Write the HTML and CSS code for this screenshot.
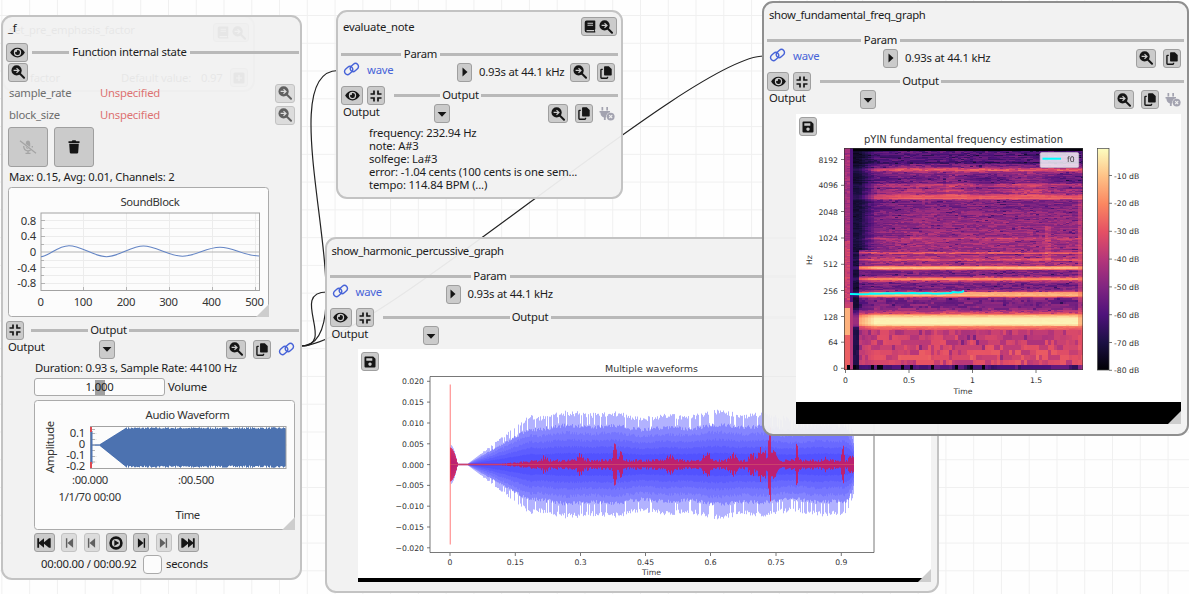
FILE: index.html
```html
<!DOCTYPE html>
<html lang="en">
<head>
<meta charset="utf-8">
<title>Audio function graph</title>
<link rel="stylesheet" href="styles.css">
</head>
<body>
<svg class="defs" width="0" height="0">
  <symbol id="eye" viewBox="0 0 576 512"><path d="M572.52 241.4C518.29 135.59 410.93 64 288 64S57.68 135.64 3.48 241.41a32.35 32.35 0 0 0 0 29.19C57.71 376.41 165.07 448 288 448s230.32-71.64 284.52-177.41a32.35 32.35 0 0 0 0-29.19zM288 400a144 144 0 1 1 144-144 143.93 143.93 0 0 1-144 144zm0-240a95.31 95.31 0 0 0-25.31 3.79 47.85 47.85 0 0 1-66.9 66.9A95.78 95.78 0 1 0 288 160z"/></symbol>
  <symbol id="zoom" viewBox="0 0 14 14"><circle cx="5.6" cy="5.4" r="5.1"/><path d="M9 8.8l4 4" stroke="currentColor" stroke-width="2" stroke-linecap="round"/><path class="cut" d="M2.6 5.4h5M5.5 3.1l2.5 2.3-2.5 2.3"/></symbol>
  <symbol id="book" viewBox="0 0 12 14"><path d="M2.4.5H11q.7 0 .7.7v8.6q0 .5-.5.7v1.7h.5v1.3H2.4Q.3 13.500.3 11.400V2.600Q.3.5 2.400.5z"/><path class="cut" d="M3.300 3.500h6M3.300 5.700h6M2.300 11.500h8"/></symbol>
  <symbol id="copy" viewBox="0 0 13 14"><path d="M5.200.3h4.300l3.200 3v6.200q0 .8-.8.8H5.200q-.8 0-.8-.8V1.100q0-.8.8-.8z"/><path d="M3 3.600H1.800q-.8 0-.8.8v8q0 .8.8.8h5.600q.8 0 .8-.8v-.8" fill="none" stroke="currentColor" stroke-width="1.500"/></symbol>
  <symbol id="link" viewBox="0 0 18 14"><g fill="none" stroke="currentColor" stroke-width="1.500"><rect x="-4.800" y="-3.200" width="9.600" height="6.400" rx="3.200" transform="translate(6 8.600) rotate(-42)"/><rect x="-4.800" y="-3.200" width="9.600" height="6.400" rx="3.200" transform="translate(12 5.400) rotate(-42)"/></g></symbol>
  <symbol id="plug" viewBox="0 0 16 14"><path d="M2.500 0h1.700v3.500H2.500zM7.300 0H9v3.500H7.300zM.5 4h10.500v1.500H10Q7 7 7.300 10.200L6.700 10.500V13H4.900v-2.600Q1.500 9.500 1.400 5.500H.5z"/><circle cx="11.700" cy="9.600" r="3.900"/><path class="cut" d="M10.200 8.100l3 3M13.200 8.100l-3 3"/></symbol>
  <symbol id="play" viewBox="0 0 8 12"><path d="M1.500 1.500L6.500 6l-5 4.500z"/></symbol>
  <symbol id="down" viewBox="0 0 10 12"><path d="M.6 4h8.800L5 8.800z"/></symbol>
  <symbol id="shrink" viewBox="0 0 12 12"><path d="M4 .5V4H.5M8 .5V4h3.500M4 11.500V8H.5M8 11.500V8h3.500" fill="none" stroke="currentColor" stroke-width="1.700"/></symbol>
  <symbol id="save" viewBox="0 0 12 12"><path fill-rule="evenodd" d="M1.500.5h7.700l2.300 2.300v7.700q0 1-1 1h-9q-1 0-1-1v-9q0-1 1-1zM2.300 2.200v2.600h6V2.200zM6 6.400a1.700 1.700 0 1 0 .01 0z"/></symbol>
  <symbol id="trash" viewBox="0 0 12 14"><path d="M.5 1.300h3.200L4.500.3h3l.8 1h3.200v1.600H.5zM1.200 3.800h9.600L10.200 12.500q-.1 1-1.200 1H3q-1.100 0-1.200-1z"/></symbol>
  <symbol id="micoff" viewBox="0 0 18 14"><path d="M6.800 3q0-2.500 2.200-2.500T11.200 3v4L6.800 4zM6.800 6.500l3 2.500q-3 0-3-2.500z"/><path d="M1 .8l16 12.400M4.700 6q0 4.700 4.300 4.900 1.600 0 2.600-.8M9 11v2.500M6.500 13.300h5M13.300 6v1.500" fill="none" stroke="currentColor" stroke-width="1.300"/></symbol>
  <symbol id="first" viewBox="0 0 14 10"><path d="M.3.3h1.800v4L7 .3v4l5-4H13.700V9.700H12L7 5.700v4L2.100 5.700v4H.3z"/></symbol>
  <symbol id="prev" viewBox="0 0 8 10"><path d="M.4.300h1.400v9.400H.4zM7.600.300v9.400L2 5z"/></symbol>
  <symbol id="circleplay" viewBox="0 0 14 14"><circle cx="7" cy="7" r="5.400" fill="none" stroke="currentColor" stroke-width="2.600"/><path d="M5.300 3.900L10.200 7l-4.900 3.100z"/></symbol>
  <symbol id="plus" viewBox="0 0 12 12"><rect x=".5" y=".5" width="11" height="11" rx="1.500"/><path class="cut" d="M6 3v6M3 6h6"/></symbol>
</svg>

<main class="canvas">
  <svg class="wires" width="1189" height="594" viewBox="0 0 1189 594">
    <path d="M301 346C371 346 265 70.500 338 70.500"/>
    <path d="M301 346C337 346 289 292 327 292"/>
    <path d="M301 346C371 346 692 56 764 56"/>
  </svg>

  <section class="node ghost">
    <div class="title-row"><span class="g-title">set_pre_emphasis_factor</span><span class="btn wide g-btn"><svg class="i-book"><use href="#book"/></svg><svg class="i14"><use href="#zoom"/></svg></span></div>
    <div class="g-param">Param</div>
    <div class="g-row"><span class="g-factor">factor</span><span class="g-value">Default value:</span><span class="g-number">0.97</span><span class="btn b18"><svg class="i12"><use href="#plus"/></svg></span></div>
  </section>

  <section class="node fn">
    <div class="fn-title">_f</div>
    <div class="fn-head"><span class="btn b21"><svg class="i-eye"><use href="#eye"/></svg></span><i class="rule r-state"></i><span class="label l-state">Function internal state</span><i class="rule fill"></i></div>
    <div class="fn-zoom"><span class="btn b20"><svg class="i14"><use href="#zoom"/></svg></span></div>
    <div class="field"><span class="key">sample_rate</span><span class="missing">Unspecified</span><span class="btn b20 faded"><svg class="i14"><use href="#zoom"/></svg></span></div>
    <div class="field second"><span class="key">block_size</span><span class="missing">Unspecified</span><span class="btn b20 faded"><svg class="i14"><use href="#zoom"/></svg></span></div>
    <div class="big-buttons"><span class="btn b40 off"><svg class="i-mic"><use href="#micoff"/></svg></span><span class="btn b40"><svg class="i-trash"><use href="#trash"/></svg></span></div>
    <div class="stats">Max: 0.15, Avg: 0.01, Channels: 2</div>

    <svg class="chart sound" width="261" height="130" viewBox="8 187 261 130">
      <rect class="frame" x="8.500" y="187.500" width="260" height="129" rx="3"/>
      <path class="corner" d="M269 304v13h-13z"/>
      <g class="grid"><path d="M83.500 213v78M126.500 213v78M169.500 213v78M212.500 213v78M255.500 213v78M41 220.500h219M41 228.500h219M41 236.500h219M41 244.500h219M41 260.500h219M41 267.500h219M41 275.500h219M41 283.500h219"/></g>
      <path class="axis" d="M41 252h219M83.500 287v4M126.500 287v4M169.500 287v4M212.500 287v4M255.500 287v4M41 220.500h4M41 228.500h3M41 236.500h4M41 244.500h3M41 260.500h3M41 267.500h4M41 275.500h3M41 283.500h4"/>
      <rect class="plot" x="41" y="213" width="218.500" height="77.500"/>
      <path class="curve" d="M41 256.800C50 256 57 245.700 69 245.700S94 256.700 106.500 256.700 131 246 143.500 246 169 256.200 182.500 256.200 206 247.300 220 247.300 242 255.500 259 256"/>
      <g class="t"><text x="120.500" y="206" textLength="59">SoundBlock</text>
      <g class="end"><text x="36" y="224.500">0.8</text><text x="36" y="240">0.4</text><text x="36" y="256">0</text><text x="36" y="271.500">-0.4</text><text x="36" y="287">-0.8</text></g>
      <g class="mid"><text x="40.500" y="305.500">0</text><text x="83" y="305.500">100</text><text x="126" y="305.500">200</text><text x="168.500" y="305.500">300</text><text x="211.500" y="305.500">400</text><text x="254.500" y="305.500">500</text></g></g>
    </svg>

    <div class="fn-output"><span class="btn b18"><svg class="i12"><use href="#shrink"/></svg></span><i class="rule r-fnout"></i><span class="label l-output">Output</span><i class="rule fill"></i></div>
    <div class="fn-combo"><span class="combo-label">Output</span><span class="btn b16"><svg class="i-down"><use href="#down"/></svg></span><span class="btn b20 push"><svg class="i14"><use href="#zoom"/></svg></span><span class="btn b18 gap7"><svg class="i-copy"><use href="#copy"/></svg></span><svg class="i-link gap7"><use href="#link"/></svg></div>
    <div class="duration">Duration: 0.93 s, Sample Rate: 44100 Hz</div>
    <div class="volume"><span class="slider"><i class="grab"></i><span>1.000</span></span><span class="volume-label">Volume</span></div>

    <svg class="chart audio" width="261" height="130" viewBox="34 400 261 130">
      <rect class="frame" x="34.500" y="400.500" width="260" height="129" rx="3"/>
      <path class="corner" d="M295 517v13h-13z"/>
      <path class="grid" d="M91 433.500h6M91 439.500h6M91 445h196M91 456.500h6M91 462h6"/>
      <path id="audio-wave" class="wave-fill"/>
      <path class="axis" d="M91 429.500h4M91 433.500h4M91 439.500h4M91 445h4M91 450.500h4M91 456.500h4M91 462h4"/>
      <rect class="plot" x="90.500" y="426.500" width="195.500" height="42"/>
      <path d="M91.500 431V464" stroke="#4c72b0" stroke-width="2"/>
      <path class="cursor" d="M91 427v5M91 462v6"/>
      <g class="t"><text x="145.500" y="419" textLength="84">Audio Waveform</text><text x="175.500" y="518.500" textLength="24.500">Time</text>
      <text x="72" y="484" textLength="36">:00.000</text><text x="178" y="484" textLength="36">:00.500</text><text x="58.500" y="501" textLength="62.500">1/1/70 00:00</text>
      <text transform="translate(53.500 473) rotate(-90)" textLength="52">Amplitude</text>
      <g class="end"><text x="85" y="437">0.1</text><text x="85" y="447.500">0</text><text x="85" y="459">-0.1</text><text x="85" y="470">-0.2</text></g></g>
    </svg>

    <div class="transport">
      <span class="btn b21"><svg class="i-first"><use href="#first"/></svg></span>
      <span class="btn b16 faded"><svg class="i-prev"><use href="#prev"/></svg></span>
      <span class="btn b16 faded"><svg class="i-prev"><use href="#prev"/></svg></span>
      <span class="btn b21"><svg class="i14"><use href="#circleplay"/></svg></span>
      <span class="btn b16"><svg class="i-prev flip"><use href="#prev"/></svg></span>
      <span class="btn b16 faded"><svg class="i-prev flip"><use href="#prev"/></svg></span>
      <span class="btn b21"><svg class="i-first flip"><use href="#first"/></svg></span>
    </div>
    <div class="clock"><span class="clock-time">00:00.00 / 00:00.92</span><i class="check"></i><span>seconds</span></div>
  </section>

  <section class="node evaluate">
    <div class="title-row"><span>evaluate_note</span><span class="btn wide"><svg class="i-book"><use href="#book"/></svg><svg class="i14"><use href="#zoom"/></svg></span></div>
    <div class="param-row"><i class="rule r-param"></i><span class="label l-param">Param</span><i class="rule fill"></i></div>
    <div class="wave-row"><svg class="i-link"><use href="#link"/></svg><span class="pin">wave</span><span class="btn b15"><svg class="i-play"><use href="#play"/></svg></span><span class="desc">0.93s at 44.1 kHz</span><span class="btn b20 push"><svg class="i14"><use href="#zoom"/></svg></span><span class="btn b18 gap7"><svg class="i-copy"><use href="#copy"/></svg></span></div>
    <div class="output-row"><span class="btn b21"><svg class="i-eye"><use href="#eye"/></svg></span><span class="btn b18"><svg class="i12"><use href="#shrink"/></svg></span><i class="rule r-out"></i><span class="label l-output">Output</span><i class="rule fill"></i></div>
    <div class="combo-row"><span class="combo-label">Output</span><span class="btn b16"><svg class="i-down"><use href="#down"/></svg></span><span class="btn b20 push"><svg class="i14"><use href="#zoom"/></svg></span><span class="btn b18 gap7"><svg class="i-copy"><use href="#copy"/></svg></span><svg class="i-plug gap6"><use href="#plug"/></svg></div>
    <div class="result"><div>frequency: 232.94 Hz</div><div>note: A#3</div><div>solfege: La#3</div><div>error: -1.04 cents (100 cents is one sem...</div><div>tempo: 114.84 BPM (...)</div></div>
  </section>

  <section class="node harmonic">
    <div class="title-row"><span class="tight">show_harmonic_percussive_graph</span></div>
    <div class="param-row"><i class="rule r-param"></i><span class="label l-param">Param</span><i class="rule fill"></i></div>
    <div class="wave-row"><svg class="i-link"><use href="#link"/></svg><span class="pin">wave</span><span class="btn b15"><svg class="i-play"><use href="#play"/></svg></span><span class="desc">0.93s at 44.1 kHz</span></div>
    <div class="output-row"><span class="btn b21"><svg class="i-eye"><use href="#eye"/></svg></span><span class="btn b18"><svg class="i12"><use href="#shrink"/></svg></span><i class="rule r-out"></i><span class="label l-output">Output</span><i class="rule fill"></i></div>
    <div class="combo-row"><span class="combo-label">Output</span><span class="btn b16"><svg class="i-down"><use href="#down"/></svg></span></div>
    <div class="figure">
      <svg width="573" height="233" viewBox="358 349 573 233">
        <rect x="358" y="349" width="573" height="229" fill="#fff"/><rect x="358" y="578" width="573" height="4" fill="#000"/>
        <path class="corner" d="M931 569v13h-13z"/>
        <g id="blue-wave" class="blue-wave"></g>
        <path d="M450.300 384.500v160" stroke="#ff9a9a" stroke-width="1.300"/>
        <path id="red-wave" class="red-wave"/><path d="M450 464.500h404" stroke="#d0506a" stroke-opacity=".7"/>
        <path class="mpl" d="M430 376.500H874V552.500H430zM427 381.300h3M427 402.100h3M427 423h3M427 443.800h3M427 464.600h3M427 485.400h3M427 506.200h3M427 527h3M427 547.800h3M450 553v3M515.300 553v3M580.500 553v3M645.500 553v3M710.500 553v3M776 553v3M841.300 553v3"/>
        <g class="dj"><text class="mid heading" x="651.500" y="371.500" textLength="93" lengthAdjust="spacingAndGlyphs">Multiple waveforms</text>
        <g class="end"><text x="424" y="384.300">0.020</text><text x="424" y="405.100">0.015</text><text x="424" y="426">0.010</text><text x="424" y="446.800">0.005</text><text x="424" y="467.600">0.000</text><text x="424" y="488.400">−0.005</text><text x="424" y="509.200">−0.010</text><text x="424" y="530">−0.015</text><text x="424" y="550.800">−0.020</text></g>
        <g class="mid"><text x="450" y="564.500">0</text><text x="515.300" y="564.500">0.15</text><text x="580.500" y="564.500">0.3</text><text x="645.500" y="564.500">0.45</text><text x="710.500" y="564.500">0.6</text><text x="776" y="564.500">0.75</text><text x="841.300" y="564.500">0.9</text><text x="651.500" y="575.300">Time</text></g></g>
      </svg>
      <span class="btn b18 save"><svg class="i12"><use href="#save"/></svg></span>
    </div>
  </section>

  <section class="node fundamental">
    <div class="title-row"><span class="tight">show_fundamental_freq_graph</span></div>
    <div class="param-row"><i class="rule r-param"></i><span class="label l-param">Param</span><i class="rule fill"></i></div>
    <div class="wave-row"><svg class="i-link"><use href="#link"/></svg><span class="pin">wave</span><span class="btn b15"><svg class="i-play"><use href="#play"/></svg></span><span class="desc">0.93s at 44.1 kHz</span><span class="btn b20 push"><svg class="i14"><use href="#zoom"/></svg></span><span class="btn b18 gap7"><svg class="i-copy"><use href="#copy"/></svg></span></div>
    <div class="output-row"><span class="btn b21"><svg class="i-eye"><use href="#eye"/></svg></span><span class="btn b18"><svg class="i12"><use href="#shrink"/></svg></span><i class="rule r-out"></i><span class="label l-output">Output</span><i class="rule fill"></i></div>
    <div class="combo-row"><span class="combo-label">Output</span><span class="btn b16"><svg class="i-down"><use href="#down"/></svg></span><span class="btn b20 push"><svg class="i14"><use href="#zoom"/></svg></span><span class="btn b18 gap7"><svg class="i-copy"><use href="#copy"/></svg></span><svg class="i-plug gap6"><use href="#plug"/></svg></div>
    <div class="figure">
      <svg width="385" height="310" viewBox="796 114 385 310">
        <defs><linearGradient id="magma" x1="0" y1="1" x2="0" y2="0"><stop offset="0" stop-color="#000004"/><stop offset=".125" stop-color="#1c1044"/><stop offset=".25" stop-color="#4f127b"/><stop offset=".375" stop-color="#812581"/><stop offset=".5" stop-color="#b5367a"/><stop offset=".625" stop-color="#e55064"/><stop offset=".75" stop-color="#fb8761"/><stop offset=".875" stop-color="#fec287"/><stop offset="1" stop-color="#fcfdbf"/></linearGradient></defs>
        <rect x="796" y="114" width="385" height="288" fill="#fff"/><rect x="796" y="402" width="385" height="22" fill="#000"/>
        <path class="corner" d="M1181 411v13h-13z"/>
        <rect x="1097.500" y="148.500" width="11.500" height="221.500" fill="url(#magma)" stroke="#444" stroke-width=".7"/>
        <path class="mpl" d="M841 159.500h3M841 185.300h3M841 211.500h3M841 238h3M841 264.300h3M841 290.500h3M841 316.500h3M841 342.200h3M841 368.300h3M845.500 370v3M909 370v3M972.500 370v3M1036 370v3M1109 175.500h3M1109 203.300h3M1109 231.300h3M1109 259.100h3M1109 286.900h3M1109 314.700h3M1109 342.500h3M1109 370.300h3"/>
        <g class="dj"><text class="mid heading large" x="963.500" y="142.500" textLength="199" lengthAdjust="spacingAndGlyphs">pYIN fundamental frequency estimation</text>
        <g class="end"><text x="838" y="162.500">8192</text><text x="838" y="188.300">4096</text><text x="838" y="214.500">2048</text><text x="838" y="241">1024</text><text x="838" y="267.300">512</text><text x="838" y="293.500">256</text><text x="838" y="319.500">128</text><text x="838" y="345.200">64</text><text x="838" y="371.300">0</text></g>
        <g class="mid"><text x="845.500" y="382.500">0</text><text x="909" y="382.500">0.5</text><text x="972.500" y="382.500">1</text><text x="1036" y="382.500">1.5</text><text x="963" y="394">Time</text><text transform="translate(812 260) rotate(-90)">Hz</text></g>
        <g><text x="1114" y="178.500">-10 dB</text><text x="1114" y="206.300">-20 dB</text><text x="1114" y="234.300">-30 dB</text><text x="1114" y="262.100">-40 dB</text><text x="1114" y="289.900">-50 dB</text><text x="1114" y="317.700">-60 dB</text><text x="1114" y="345.500">-70 dB</text><text x="1114" y="373.300">-80 dB</text></g></g>
      </svg>
      <canvas id="spectrogram" class="spectrogram" width="239" height="222"></canvas>
      <svg class="legend" width="239" height="222" viewBox="844 148 239 222">
        <rect x="844.300" y="148.300" width="238.500" height="221.500" fill="none" stroke="#333" stroke-width=".7"/>
        <path d="M850 294L860 294.300 869 294 870 293.400 880 293.800 886 293.200 893 293.600 899 292.900 906 293.500 912 293 920 293.400 926 292.900 932 293.500 938 293.700 945 293.200 951 293 953 292 958 292.400 962 292 964 290.600" fill="none" stroke="#00ffff" stroke-width="2"/>
        <rect x="1040.200" y="152.500" width="38.500" height="15" rx="1.500" fill="#fff" fill-opacity=".8" stroke="#ccc" stroke-width=".6"/>
        <path d="M1042.500 158.700h18.500" stroke="#00ffff" stroke-width="2"/><text class="djt" x="1067" y="161.800">f0</text>
      </svg>
      <span class="btn b18 save"><svg class="i12"><use href="#save"/></svg></span>
    </div>
  </section>
</main>
<script src="plots.js"></script>
</body>
</html>
```
FILE: styles.css
```css
* { box-sizing: border-box; }
body { margin: 0; font-family: "Noto Sans", "Open Sans", sans-serif; font-size: 11.3px; letter-spacing: -0.22px; line-height: 14px; color: #1c1c1c; overflow: hidden; }
.defs { position: absolute; }
.canvas {
  position: relative; width: 1189px; height: 594px; overflow: hidden;
  background-color: #fefefe;
  background-image: linear-gradient(90deg, #f0f0f0 1px, transparent 1px), linear-gradient(#f0f0f0 1px, transparent 1px);
  background-size: 27.77px 27.77px; background-position: 1.4px 15px;
}
.wires { position: absolute; left: 0; top: 0; }
.wires path { fill: none; stroke: #222; stroke-width: 1.2; }
.node { position: absolute; border: 2px solid #c3c3c3; border-radius: 11px; background: rgba(241, 241, 241, .95); white-space: nowrap; display: flex; flex-direction: column; }
.ghost { left: 2px; top: 15px; width: 253px; height: 77px; }
.fn { left: 1px; top: 14.5px; width: 300.5px; height: 565.5px; }
.evaluate { left: 336px; top: 10px; width: 286.5px; height: 189px; }
.harmonic { left: 324.500px; top: 237px; width: 614px; height: 356px; }
.fundamental { left: 762px; top: 1px; width: 427px; height: 434.5px; border-color: #8f8f8f; }

.btn { flex: none; display: inline-flex; align-items: center; justify-content: center; height: 19px; background: #cbcbcb; border: 1px solid #9f9f9f; border-radius: 3px; color: #151515; --cut: #cbcbcb; }
.btn.faded { background: #dcdcdc; border-color: #c3c3c3; color: #606060; --cut: #dcdcdc; }
.btn.off { color: #a4a4a4; }
.b15 { width: 15px; } .b16 { width: 16px; } .b18 { width: 18px; } .b20 { width: 20px; } .b21 { width: 22px; }
.b40 { width: 40px; height: 40px; }
.wide { width: 36px; gap: 3px; }
svg { fill: currentColor; flex: none; display: block; }
.cut { fill: none; stroke: var(--cut, #f1f1f1); stroke-width: 1.2; }
.i14 { width: 14px; height: 14px; } .i12 { width: 12px; height: 12px; }
.i-eye { width: 15px; height: 13px; } .i-book { width: 12px; height: 13px; } .i-copy { width: 12px; height: 13px; }
.i-link { width: 17px; height: 14px; color: #4763d8; } .i-plug { width: 16px; height: 14px; color: #a3a3b0; }
.i-play { width: 8px; height: 12px; } .i-down { width: 10px; height: 12px; }
.i-first { width: 14px; height: 10px; } .i-prev { width: 9px; height: 10px; } .flip { transform: scaleX(-1); }
.i-mic { width: 18px; height: 14px; } .i-trash { width: 12px; height: 14px; }
.rule { flex: none; height: 3px; background: #b9b9b9; }
.rule.fill { flex: 1; }
.label { flex: none; text-align: center; padding-bottom: 1px; }
.l-param { width: 39px; } .l-output { width: 41px; } .l-state { width: 121px; }
.push { margin-left: auto; } .gap7 { margin-left: 7px; } .gap6 { margin-left: 6px; }
.tight { letter-spacing: -0.3px; }

.title-row { display: flex; justify-content: space-between; height: 25px; padding: 5px 4px 0 5px; }
.param-row { display: flex; align-items: center; height: 24px; padding: 0 3px; }
.wave-row { display: flex; align-items: center; height: 20px; margin: -4px 0 3px; padding: 0 6px 0 5px; }
.wave-row > .i-link { margin-bottom: 6px; }
.wave-row .pin { width: 97px; padding-left: 7px; margin-bottom: 4px; color: #4763d8; }
.desc { margin-left: 7px; }
.output-row { display: flex; align-items: center; height: 20px; padding: 0 3px; }
.output-row .btn { margin-top: 1px; }
.output-row .btn + .btn { margin-left: 4px; }
.output-row .r-out { margin-left: 9px; }
.combo-row { display: flex; align-items: center; height: 19px; margin-top: -1px; padding: 0 6px 0 5px; }
.combo-label { width: 91px; margin-bottom: 4px; }

.evaluate .title-row { height: 30px; padding-top: 5px; align-items: flex-start; }
.evaluate .title-row > span:first-child { padding-top: 3px; }
.evaluate .r-param { width: 60px; } .evaluate .r-out { width: 46px; }
.result { padding: 3px 0 0 31px; line-height: 13px; letter-spacing: -0.18px; }
.harmonic .r-param { width: 141px; } .harmonic .r-out { width: 127px; }
.fundamental .r-param { width: 94px; } .fundamental .r-out { width: 80px; }

.figure { display: grid; margin: 4px 0 0 31.500px; justify-items: start; align-items: start; }
.figure > * { grid-area: 1 / 1; }
.fundamental .figure { margin: 5px 0 0 32px; }
.save { margin: 3px 0 0 3px; }
.spectrogram, .legend { margin: 34px 0 0 48px; }

.ghost .title-row { height: 32px; padding-top: 6px; }
.g-param { height: 19px; padding-left: 76px; }
.g-row { display: flex; align-items: center; padding-left: 26px; }
.g-factor { width: 91px; } .g-value { width: 80px; } .g-number { width: 29px; }

.fn-title { height: 26px; padding: 4px 0 0 5px; }
.fn-head { display: flex; align-items: center; height: 20px; padding: 0 1px 0 3px; }
.fn-head .r-state { width: 37px; margin-left: 4px; }
.fn-zoom { height: 20px; padding-left: 5px; display: flex; }
.field { display: flex; align-items: center; height: 19px; margin-top: 1px; padding: 0 4.5px 0 6px; }
.field.second { margin-top: 3px; }
.key { width: 91px; color: #6d6d6d; } .missing { flex: 1; color: #dd7373; }
.big-buttons { display: flex; gap: 6px; padding: 2.5px 5px 0; }
.stats { height: 20px; padding: 3px 6px 0; }
.chart { margin-left: 5px; }
.chart.audio { margin-left: 31px; margin-top: 4px; }
.fn-output { display: flex; align-items: center; height: 20px; margin-top: 3px; padding: 0 1px 0 3px; }
.r-fnout { width: 57px; margin-left: 7px; }
.fn-combo { display: flex; align-items: center; height: 18px; padding: 0 4.5px 0 5px; }
.duration { height: 20px; padding: 3px 0 0 32px; }
.volume { display: flex; align-items: center; height: 18px; padding-left: 31px; }
.slider { width: 131px; height: 18px; border: 1px solid #aaa; border-radius: 3px; background: #fcfcfc; display: grid; place-items: center; }
.slider > * { grid-area: 1 / 1; }
.grab { width: 10px; height: 15px; background: #a0a0a0; }
.volume-label { margin-left: 3px; }
.transport { display: flex; gap: 6.500px; height: 19px; margin: 3px 0 0 31px; }
.transport .b21 { width: 20.500px; }
.clock { display: flex; align-items: center; height: 19px; margin: 2.500px 0 0 38px; }
.clock-time { width: 102px; }
.check { width: 19px; height: 19px; margin-right: 4px; background: #fcfcfc; border: 1px solid #aaa; border-radius: 4px; }

.frame { fill: #fcfcfc; stroke: #ababab; }
.corner { fill: #cdcdcd; }
.grid { stroke: #ececec; fill: none; }
.axis { stroke: #b4b4b4; fill: none; }
.plot { fill: none; stroke: #a2a2a2; }
.curve { fill: none; stroke: #6384c4; stroke-width: 1.100; }
.t text { fill: #333; }
.end { text-anchor: end; } .mid { text-anchor: middle; }
.wave-fill { fill: none; stroke: #4c72b0; stroke-width: 1; }
.cursor { stroke: #dd4850; stroke-width: 2; }
.dj, .djt { font-family: "DejaVu Sans", sans-serif; font-size: 7.700px; letter-spacing: 0; fill: #333; }
.heading { font-size: 9.300px; }
.heading.large { font-size: 11.200px; }
.mpl { fill: none; stroke: #555; stroke-width: .8; }
.blue-wave path { fill: none; stroke: #0000ff; stroke-opacity: .11; }
.blue-wave path:first-child { stroke-opacity: .3; }
.blue-wave path:nth-child(2) { stroke-opacity: .25; }
.red-wave { fill: none; stroke: #e01040; stroke-opacity: .75; }
```
FILE: plots.js
```js
let seed = 7;
const rnd = () => { seed = (seed * 16807) % 2147483647; return seed / 2147483647; };
const setPath = (id, d) => document.getElementById(id).setAttribute("d", d);
const clamp = (v, a, b) => Math.min(b, Math.max(a, v));

// Playback waveform
let d = "";
for (let x = 92.500; x < 286; x++) {
  const e = x < 100 ? 0.02 : clamp((x - 99) / 28, 0, 1);
  const k = e >= 1 ? 0.9 + rnd() * 0.1 : e;
  d += `M${x} ${445 - 17.500 * k - 0.3}V${445 + 22.500 * k + 0.3}`;
}
setPath("audio-wave", d);

// Harmonic (blue) layers, from the full envelope to the dense centre, and percussive (red) layer
const factors = [1, 0.76, 0.62, 0.48, 0.35, 0.22];
const layers = factors.map(() => "");
let red = "";
const spikes = [[580, 11, 5], [588, 7, 3], [615, 21, 2.500], [621, 14, 3], [545, 9, 6], [670, 10, 7], [707, 13, 7], [733, 12, 6], [752, 12, 5], [762, 18, 6], [769.500, 50, 1.600], [774, 16, 5], [797, 22, 2], [825, 8, 6], [843, 21, 2], [852, 9, 6]];
for (let x = 450.500; x < 854.500; x++) {
  let a;
  if (x < 458) a = Math.max(0, 20 * (1 - Math.pow((x - 450) / 8, 2)));
  else if (x < 468) a = 0.8;
  else if (x < 532) a = 1 + (x - 468) * 0.75;
  else a = 49 + 2 * Math.sin(x / 22) + 1.500 * Math.sin(x / 8);
  if (x > 846) a *= 1 - Math.pow((x - 846) / 13, 1.500);
  factors.forEach((f, i) => {
    const gap = i === 0 && x > 490 && rnd() < 0.18;
    const h = a * (gap ? 0.78 : f) * (x < 480 ? 1 : 0.94 + rnd() * 0.11);
    layers[i] += `M${x} ${464.500 - h}V${464.500 + h}`;
  });
  let r = x < 458 ? a * 0.85 : x < 500 ? 0.8 : clamp((x - 495) / 9, 1, 5);
  for (const [sx, h, w] of spikes) r = Math.max(r, h * Math.exp(-Math.pow((x - sx) / w, 2)));
  r *= x < 500 ? 1 : 0.5 + rnd() * 0.6;
  red += `M${x} ${464.500 - r}V${464.500 + r}`;
}
const group = document.getElementById("blue-wave");
for (const layer of layers) {
  const path = document.createElementNS("http://www.w3.org/2000/svg", "path");
  path.setAttribute("d", layer);
  group.appendChild(path);
}
setPath("red-wave", red);

// Spectrogram
const magma = [[0, 0, 4], [28, 16, 68], [79, 18, 123], [129, 37, 129], [181, 54, 122], [229, 80, 100], [251, 135, 97], [254, 194, 135], [252, 253, 191]];
const color = v => {
  const t = clamp(v, 0, 1) * 8, i = Math.min(7, Math.floor(t)), f = t - i;
  return `rgb(${magma[i].map((c, k) => Math.round(c + (magma[i + 1][k] - c) * f)).join(",")})`;
};
const levels = [[148, .02], [150, .03], [151, .26], [160, .27], [162, .2], [164, .34], [167, .42], [168.500, .58], [170, .6], [172, .44], [176, .32], [182, .36], [184, .5], [186, .52], [188, .42], [191, .52], [193, .44], [195, .64], [198, .66], [200, .38], [206, .36], [212, .4], [225, .42], [236, .43], [238, .54], [240, .46], [251, .45], [252.500, .68], [254, .44], [258, .5], [259.500, .68], [261, .44], [265, .48], [266.500, .86], [268.500, .84], [270, .38], [275, .36], [277.500, .66], [278.500, .84], [280, .6], [283, .34], [289, .36], [291, .52], [292, .8], [295.500, .86], [297, .5], [299, .34], [308, .38], [311, .5], [313, .62], [315, .86], [318, .97], [323, .98], [325, .9], [326, .74], [329, .64], [330, .53], [350, .57], [358, .6], [363, .57], [365, .38], [366, .25], [370, .25]];
const level = y => {
  for (let i = 1; i < levels.length; i++) if (y <= levels[i][0]) {
    const [y0, v0] = levels[i - 1], [y1, v1] = levels[i];
    return v0 + (v1 - v0) * (y - y0) / (y1 - y0);
  }
  return .25;
};
const ctx = document.getElementById("spectrogram").getContext("2d");
for (let y = 0; y < 222;) {
  const ay = y + 148, h = ay < 298 ? 1 : ay < 310 ? 2 : ay < 330 ? 1 : 5;
  let run = 0;
  const wobble = ay < 262 ? (rnd() - .5) * .06 : 0;
  for (let x = 0; x < 239; x += 3) {
    if (rnd() < .55) run = rnd() - .5;
    let v = level(ay + h / 2 - .5);
    const tonal = v > .62;
    v += wobble + run * (ay < 151 ? .02 : v > .9 ? .01 : tonal ? .05 : .15);
    if (!tonal && rnd() < .04) v -= .12;
    if (ay > 172 && ay < 196 && x > 100) v += .05 * Math.sin(x / 13);
    if (ay > 225 && ay < 262 && x > 200 && x < 207) v += .07;
    if (x < 6) v = ay > 306 && ay < 334 ? .84 : ay > 334 ? .66 : .46 + run * .12 + (ay > 240 ? .1 : 0);
    else if (x < 9) v = ay > 300 ? .5 : .25;
    else if (x < 15) v = ay > 326 || ay < 308 ? v * .25 : v * .45;
    else if (x < 30) v *= ay < 250 ? .3 + (x - 15) / 28 : .85 + (x - 15) / 100;
    else if (x < 60 && ay < 250) v *= .86 + (x - 30) / 220;
    if (x > 232 && ay > 200) v = v * .6 + .27;
    if (ay > 363 && rnd() < .2 && x < 160) v = .02;
    ctx.fillStyle = color(v);
    ctx.fillRect(x, y, 3, h);
  }
  y += h;
}
```
